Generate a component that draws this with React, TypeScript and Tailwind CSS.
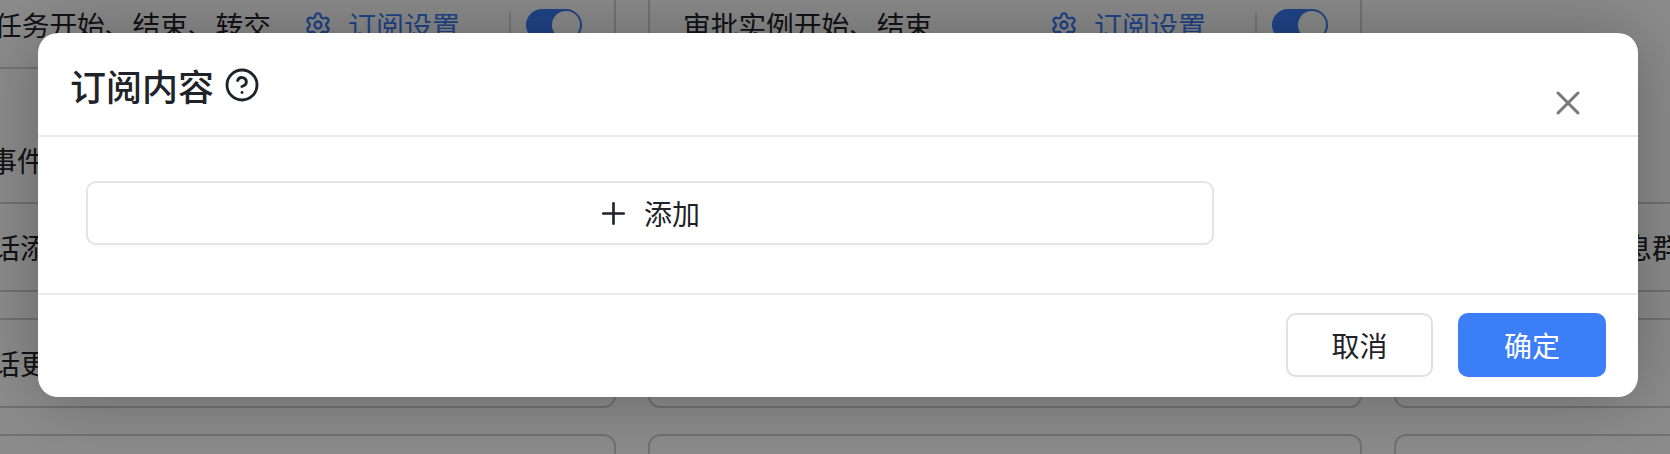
import { CircleHelp, Plus, Settings, X } from "lucide-react";

const font = "font-['Noto_Sans_CJK_SC','Noto_Sans',sans-serif]";

function SubscribeCard({ label, labelClass }: { label: string; labelClass: string }) {
  return (
    <div className="flex h-[89px] items-center rounded-b-xl border-2 border-[#d4d4d6] bg-white">
      <span className={`w-[400px] text-[27.7px] whitespace-nowrap text-[#1f2329] ${labelClass}`}>{label}</span>
      <Settings className="mr-[16px] text-[#3b7ef8]" size={28} strokeWidth={2} />
      <span className="w-[114px] text-[28px] text-[#3b7ef8]">订阅设置</span>
      <span className="mr-[15px] ml-[47px] h-[25px] w-[2px] bg-[#dcdcde]" />
      <span className="flex h-8 w-14 items-center justify-end rounded-full bg-[#3b7ef8] pr-[2px]">
        <span className="size-7 rounded-full bg-white" />
      </span>
    </div>
  );
}

function EventCard({ label, indent }: { label?: string; indent: string }) {
  return (
    <div className={`flex h-[90px] items-center rounded-xl border-2 border-[#d0d0d2] bg-white ${indent}`}>
      {label && <span className="text-[28px] text-[#1f2329]">{label}</span>}
    </div>
  );
}

export default function App() {
  return (
    <div className={`relative h-[454px] w-[1670px] overflow-hidden bg-white ${font}`}>
      {/* page behind the dialog */}
      <div className="-mt-[20px] -ml-[98px] grid w-[2206px] grid-cols-[714px_714px_714px] gap-x-8">
        <SubscribeCard label="任务开始、结束、转交" labelClass="pl-[90px]" />
        <SubscribeCard label="审批实例开始、结束" labelClass="pl-[33px]" />
        <div />
        <div className="col-span-3 h-[133px] pt-[70px] pl-[87px] text-[28px] text-[#1f2329]">事件</div>
      </div>
      <div className="-ml-[98px] grid w-[2206px] grid-cols-[714px_714px_714px] gap-x-8 gap-y-[26px]">
        <EventCard label="会话添加" indent="pl-[60px]" />
        <EventCard indent="pl-[34px]" />
        <EventCard label="消息群" indent="pl-[200px]" />
        <EventCard label="会话更新" indent="pl-[60px]" />
        <EventCard indent="pl-[34px]" />
        <EventCard indent="pl-[34px]" />
        <EventCard indent="pl-[34px]" />
        <EventCard indent="pl-[34px]" />
        <EventCard indent="pl-[34px]" />
      </div>

      <div className="absolute inset-0 flex bg-black/45 pt-[33px] pl-[38px]">
        <div className="flex h-[364px] w-[1600px] flex-col rounded-[20px] bg-white shadow-[0_0_70px_rgba(0,0,0,0.28)]">
          <div className="flex h-[104px] shrink-0 items-start justify-between border-b-2 border-[#e9eaec] pr-[50px] pl-[32px]">
            <div className="flex items-center pt-[26px]">
              <span className="text-[36px] leading-[52px] font-medium text-[#1f2329]">订阅内容</span>
              <CircleHelp className="mt-[-1px] ml-[10px] text-[#1f2329]" size={36} strokeWidth={1.9} />
            </div>
            <X className="mt-[50px] text-[#777777]" size={40} strokeWidth={1.8} />
          </div>
          <div className="flex h-[158px] shrink-0 border-b-2 border-[#e9eaec] pt-[44px] pl-[48px]">
            <button className="flex h-[64px] w-[1128px] items-center justify-center gap-[13px] rounded-[10px] border-2 border-[#e3e4e6] bg-white pr-[4px] text-[28px] text-[#1f2329] shadow-[0_3px_4px_rgba(0,0,0,0.02)]">
              <Plus size={35} strokeWidth={1.8} />
              添加
            </button>
          </div>
          <div className="flex justify-end gap-[25px] pt-[18px] pr-[32px]">
            <button className="h-[64px] w-[147px] rounded-[10px] border-2 border-[#e0e1e3] bg-white text-[28px] text-[#1f2329] shadow-[0_3px_4px_rgba(0,0,0,0.02)]">
              取消
            </button>
            <button className="h-[64px] w-[148px] rounded-[10px] bg-[#3b7ef8] text-[28px] text-white">确定</button>
          </div>
        </div>
      </div>
    </div>
  );
}
